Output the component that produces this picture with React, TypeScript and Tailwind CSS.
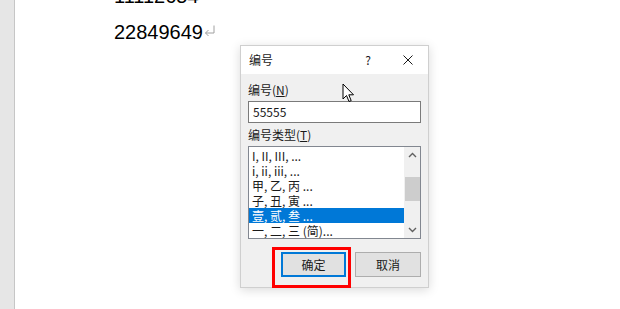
import React from 'react';

const uiFont = { fontFamily: '"Microsoft YaHei UI", "Noto Sans CJK SC", "Noto Sans", sans-serif' };

const items = ['I, II, III, ...', 'i, ii, iii, ...', '甲, 乙, 丙 ...', '子, 丑, 寅 ...', '壹, 贰, 叁 ...', '一, 二, 三 (简)...'];

// Word paragraph mark
function ReturnMark() {
  return (
    <svg width="11" height="12" viewBox="0 0 11 12" className="ml-[1px] inline-block align-[2px]">
      <path d="M10 0.5 V8 H1.5 M4.5 5 L1.5 8 L4.5 11" fill="none" stroke="#a0a0a0" strokeWidth="1" />
    </svg>
  );
}

function Cursor() {
  return (
    <svg width="13" height="20" viewBox="0 0 13 20" className="absolute left-[342px] top-[83px]">
      <path d="M1 1 L1 16 L4.5 12.5 L7 18.5 L9.2 17.6 L6.8 11.8 L11.5 11.8 Z" fill="#fff" stroke="#000" strokeWidth="1" strokeLinejoin="round" />
    </svg>
  );
}

function Chevron({ up }: { up?: boolean }) {
  return (
    <svg width="9" height="6" viewBox="0 0 9 6">
      <path d={up ? 'M1 5 L4.5 1.5 L8 5' : 'M1 1 L4.5 4.5 L8 1'} fill="none" stroke="#606060" strokeWidth="1.4" />
    </svg>
  );
}

function NumberDialog() {
  return (
    <div
      className="absolute left-[240px] top-[45px] flex h-[243px] w-[189px] flex-col border border-[#cfcfcf] shadow-[0_2px_10px_rgba(0,0,0,0.15)]"
      style={uiFont}
    >
      {/* Title bar */}
      <div className="flex h-[28px] shrink-0 items-center bg-white pl-[8px] text-[12px] text-[#1a1a1a]">
        <span className="flex-1">编号</span>
        <span className="w-[20px] text-center">?</span>
        <svg width="10" height="10" viewBox="0 0 10 10" className="ml-[25px] mr-[15px]">
          <path d="M0.5 0.5 L9.5 9.5 M9.5 0.5 L0.5 9.5" stroke="#1a1a1a" strokeWidth="1" />
        </svg>
      </div>

      {/* Body */}
      <div className="flex flex-1 flex-col bg-[#f0f0f0] px-[7px] text-[12px] text-[#1a1a1a]">
        <div className="mt-[8px] leading-[16px]">
          编号(<span className="underline">N</span>)
        </div>
        <div className="mt-[3px] flex h-[22px] items-center border border-[#7a7a7a] bg-white pl-[4px] leading-none">55555</div>
        <div className="mt-[4px] leading-[16px]">
          编号类型(<span className="underline">T</span>)
        </div>
        <div className="mt-[3px] flex h-[93px] border border-[#828790] bg-white">
          <div className="flex flex-1 flex-col pt-[1px]">
            {items.map((it, i) => (
              <div
                key={it}
                className={`flex h-[15px] items-center pl-[3px] leading-none ${i === 4 ? 'bg-[#0078d7] text-white' : ''}`}
              >
                {it}
              </div>
            ))}
          </div>
          <div className="flex w-[16px] flex-col items-center bg-[#f0f0f0]">
            <div className="flex h-[16px] items-center justify-center">
              <Chevron up />
            </div>
            <div className="mt-[14px] h-[24px] w-[15px] bg-[#cdcdcd]" />
            <div className="flex-1" />
            <div className="flex h-[16px] items-center justify-center">
              <Chevron />
            </div>
          </div>
        </div>

        {/* Buttons */}
        <div className="mt-[13px] flex justify-end gap-[9px]">
          <div className="relative">
            <div className="flex h-[25px] w-[65px] items-center justify-center border-2 border-[#0078d7] bg-[#e1e1e1]">确定</div>
            <div className="pointer-events-none absolute -left-[9px] -top-[5px] h-[41px] w-[79px] border-[3px] border-[#ff0000]" />
          </div>
          <div className="flex h-[25px] w-[66px] items-center justify-center border border-[#adadad] bg-[#e1e1e1]">取消</div>
        </div>
      </div>
    </div>
  );
}

export default function App() {
  return (
    <div className="relative flex h-[309px] w-[620px] overflow-hidden bg-white">
      <div className="w-[15px] shrink-0 border-r border-[#c6c6c6] bg-[#e6e6e6]" />
      <div
        className="-mt-[22px] pl-[99px] text-[20px] leading-[36px] text-black"
        style={{ fontFamily: '"Liberation Sans", Arial, sans-serif' }}
      >
        <div>
          11112654<ReturnMark />
        </div>
        <div>
          22849649<ReturnMark />
        </div>
      </div>
      <NumberDialog />
      <Cursor />
    </div>
  );
}
